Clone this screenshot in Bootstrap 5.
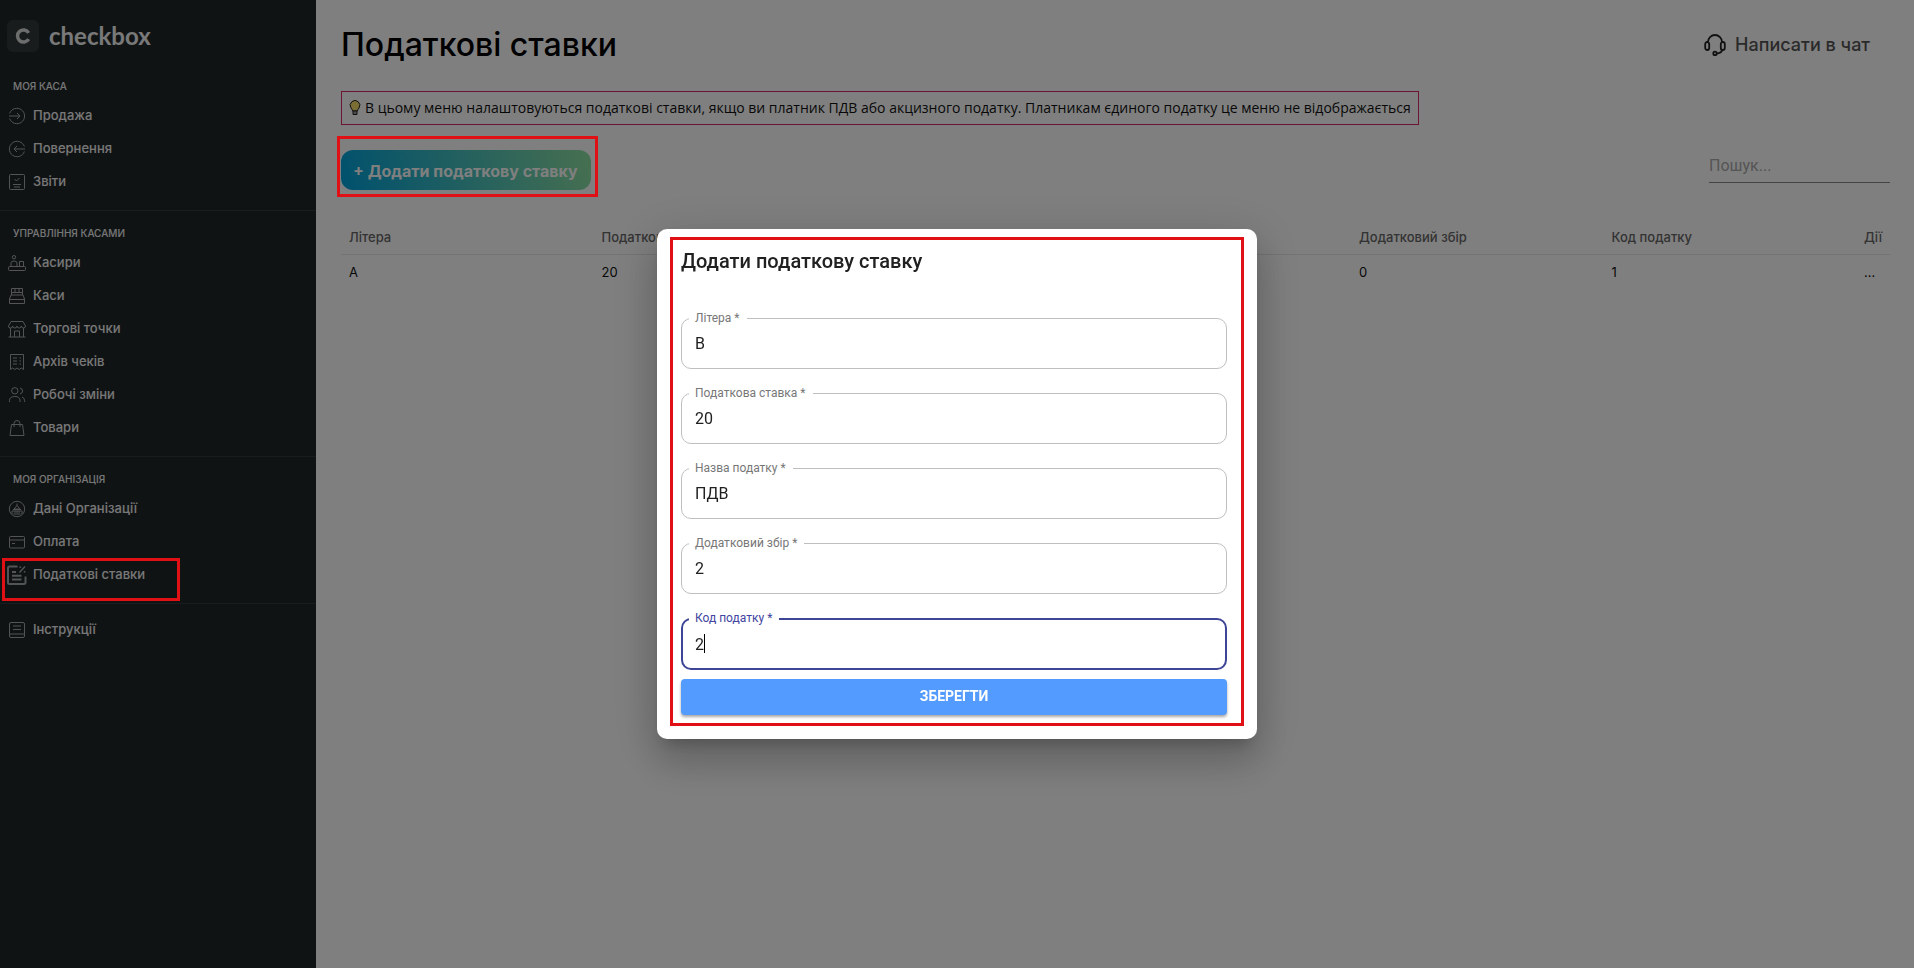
<!DOCTYPE html>
<html lang="uk">
<head>
<meta charset="utf-8">
<meta name="viewport" content="width=device-width, initial-scale=1">
<title>Податкові ставки</title>
<link href="https://cdn.jsdelivr.net/npm/bootstrap@5.3.0/dist/css/bootstrap.min.css" rel="stylesheet">
<style>
body{font-family:Inter,"Noto Sans",sans-serif;font-size:13px;color:#111;background:#fff}
/* sidebar */
.side{width:316px;background:#202629}
.brand{height:52px;padding:20px 0 0 7px;gap:10px;color:#fff;text-decoration:none}
.brand-mark{width:32px;height:32px;border-radius:6px;background:#32383b}
.brand-name{font:700 24px/32px Lato,sans-serif;color:#f2f2f2}
.group{padding:14px 0 12px;border-bottom:1px solid #343b3e}
.group.first{padding-top:26px}
.group.last{padding-top:9px;border:0}
.group h2{font:500 10px/16px Inter,sans-serif;margin:0 0 5px 13px;color:#eee}
.side a.item{height:33px;padding-left:8px;gap:7px;color:#f0f0f0;font-size:13px;font-weight:500;text-decoration:none}
.item svg{width:18px;height:18px;fill:none;stroke:#a4a9ab;stroke-width:1;flex:none}
/* main */
.page{padding:25px 24px 25px 25px}
.page h1{font:500 32px/40px Inter,sans-serif;margin:0;color:#000}
.chat{font-size:18px;line-height:24px;font-weight:500;color:#555;text-decoration:none;gap:9px;margin-right:20px}
.tip{border:1px solid #d62a6c;height:34px;padding:0 7px;margin-top:26px;font-family:"Open Sans","Noto Sans",sans-serif;font-size:14px;line-height:32px;gap:4px;width:fit-content}
.toolbar{margin-top:25px}
.add{height:40px;border:0;border-radius:12px;padding:2px 13px 0 12px;font-size:16px;font-weight:700;color:#fff;background:linear-gradient(72deg,#00a2dc,#8fe0a0)}
.search{width:181px;height:33px;border:0;border-bottom:1px solid #888;border-radius:0;padding:0 0 2px;font:16px/30px Roboto,sans-serif;background:transparent}
.search::placeholder{color:#aaa}
.rates{margin:32px 0 0;table-layout:fixed;font-size:13px;line-height:20px}
.rates th{font-weight:500;color:#666;padding:5px 8px 7px;border-color:#e6e6e6}
.rates td{padding:7px 8px;border:0;color:#111}
.rates .acts{width:34px;white-space:nowrap}
/* red frames drawn over everything */
.frame{position:absolute;border:3px solid #e01014;z-index:1070;pointer-events:none}
.frame-item{top:0;left:2px;width:178px;height:43px}
.frame-add{inset:-14px -7px -7px -4px}
.frame-form{inset:8px 13px 13px 13px}
/* dialog */
.rate-modal .modal-dialog{max-width:600px}
.rate-modal .modal-content{border:0;border-radius:10px;padding:20px 30px 24px 24px;font-family:Roboto,sans-serif;box-shadow:0 11px 15px -7px rgba(0,0,0,.2),0 24px 38px 3px rgba(0,0,0,.14),0 9px 46px 8px rgba(0,0,0,.12)}
.rate-modal .modal-title{font-size:20px;line-height:24px;font-weight:500;color:#212121;margin-bottom:45px}
.field{position:relative;margin-bottom:24px}
.field label{position:absolute;left:8px;top:-8px;padding:0 7px 0 6px;background:#fff;font-size:12px;line-height:16px;color:#777}
.field .form-control{height:51px;border:1px solid #bfbfbf;border-radius:10px;padding:0 13px;font-size:16px;color:#212121;box-shadow:none}
.field.active{margin-bottom:9px}
.field.active label{color:#3f45a0}
.field.active .form-control{height:52px;border:2px solid #3f4596;padding:0 12px;caret-color:transparent}
.cursor{position:absolute;left:23px;top:16px;width:1px;height:19px;background:#000}
.save{height:36px;border:0;border-radius:4px;padding:0 0 2px;background:#539bff;color:#fff;font-size:14px;font-weight:700;box-shadow:0 2px 3px rgba(0,0,0,.35)}
</style>
<script src="https://cdn.jsdelivr.net/npm/bootstrap@5.3.0/dist/js/bootstrap.bundle.min.js"></script>
</head>
<body>
<div class="d-flex min-vh-100">
  <nav class="side flex-shrink-0">
    <a href="#" class="brand d-flex align-items-center">
      <span class="brand-mark d-flex align-items-center justify-content-center"><svg width="16" height="16" viewBox="0 0 14 14" fill="none" stroke="#d8dada" stroke-width="3"><path d="M12 4.2A5.3 5.3 0 1 0 12 9.8"/></svg></span>
      <span class="brand-name">checkbox</span>
    </a>
    <section class="group first">
      <h2>МОЯ КАСА</h2>
      <a href="#" class="item d-flex align-items-center"><svg viewBox="0 0 18 18"><path d="M1.6 6.5a7.7 7.7 0 1 1 0 5M1 9h11M9 6l3 3-3 3"/></svg>Продажа</a>
      <a href="#" class="item d-flex align-items-center"><svg viewBox="0 0 18 18"><path d="M16.4 6.5a7.7 7.7 0 1 0 0 5M17 9H6M9 6 6 9l3 3"/></svg>Повернення</a>
      <a href="#" class="item d-flex align-items-center"><svg viewBox="0 0 18 18"><rect x="1.5" y="1.5" width="15" height="15" rx="1"/><path d="m6.500 6 2 2 3-3M5 11.500h8M6 14h6"/></svg>Звіти</a>
    </section>
    <section class="group">
      <h2>УПРАВЛІННЯ КАСАМИ</h2>
      <a href="#" class="item d-flex align-items-center"><svg viewBox="0 0 18 18"><circle cx="6" cy="3.200" r="1.700"/><path d="M3 12V9q0-2 3-2t3 2v3M11.500 12V7.500h4V12"/><rect x=".5" y="12.500" width="17" height="4" rx="1"/></svg>Касири</a>
      <a href="#" class="item d-flex align-items-center"><svg viewBox="0 0 18 18"><path d="M3.500 8V1.500h11V8M3.500 5.500h11M7 1.500v4M11 1.500v4M3 8h12l1.500 4v4.500h-15V12zM1.500 12.500h15"/></svg>Каси</a>
      <a href="#" class="item d-flex align-items-center"><svg viewBox="0 0 18 18"><path d="M3 1.500h12l2.500 4.500q0 2-2 2t-2.200-2q0 2-2.100 2T9 6q0 2-2.200 2T4.700 6q0 2-2.200 2T.5 6zM2.500 8v9M15.500 8v9M.5 17h17M6.500 17v-6h5v6"/></svg>Торгові точки</a>
      <a href="#" class="item d-flex align-items-center"><svg viewBox="0 0 18 18"><path d="M2.500 1.500h13v15l-2.200-1.500-2.100 1.500L9 15l-2.200 1.500L4.700 15l-2.200 1.500zM5 5h4M5 8h4M5 11h4M11.500 5h1.500M11.500 8h1.500M11.500 11h1.500"/></svg>Архів чеків</a>
      <a href="#" class="item d-flex align-items-center"><svg viewBox="0 0 18 18"><circle cx="6.800" cy="4.800" r="3.200"/><path d="M1.500 16v-1.500q0-4 5.300-4t5.200 4V16M12 2q2.600.6 2.600 3T12 8M14 11q2.600 1 2.600 3.500V16"/></svg>Робочі зміни</a>
      <a href="#" class="item d-flex align-items-center"><svg viewBox="0 0 18 18"><path d="M3.500 5.500h11l1.500 11H2zM6 8V4.500a3 3 0 0 1 6 0V8"/></svg>Товари</a>
    </section>
    <section class="group">
      <h2>МОЯ ОРГАНІЗАЦІЯ</h2>
      <a href="#" class="item d-flex align-items-center"><svg viewBox="0 0 18 18"><circle cx="9" cy="9" r="7.700"/><path d="M9 3.500v2M9 5.500 6 9h6zM5 9.500h8M4 14v-3h10v3M6 12h6M5.500 14h7"/></svg>Дані Організації</a>
      <a href="#" class="item d-flex align-items-center"><svg viewBox="0 0 18 18"><rect x="1.500" y="3.500" width="15" height="11.500" rx="1"/><path d="M1.500 7h15M4 10.500h3"/></svg>Оплата</a>
      <div class="position-relative">
        <a href="#" class="item d-flex align-items-center"><svg viewBox="0 0 18 18" overflow="visible"><path d="M9.500.5H1.500Q0 .5 0 2v14.500Q0 18 1.500 18h14q2 0 2-1.500v-6M4 6h4M4 9.800h9.500M4 13.500h9.500" stroke-width="2"/><path d="m11.500 6.500 5.500-6M11.500 1.200h1.600M15.800 5.800h1.600" stroke-width="1.400"/></svg>Податкові ставки</a>
        <span class="frame frame-item"></span>
      </div>
    </section>
    <section class="group last">
      <a href="#" class="item d-flex align-items-center"><svg viewBox="0 0 18 18"><rect x="1.500" y="1.500" width="15" height="15" rx="1.500"/><path d="M5 5h8M5 8.500h8M1.500 13h15"/></svg>Інструкції</a>
    </section>
  </nav>
  <main class="page flex-grow-1">
    <div class="d-flex justify-content-between align-items-center">
      <h1>Податкові ставки</h1>
      <a href="#" class="chat d-flex align-items-center"><svg width="22" height="22" viewBox="0 0 22 22" fill="none" stroke="#222" stroke-width="1.800"><path d="M4 9V8a7 7 0 0 1 14 0v1M18 15.500q0 3.500-5 4"/><rect x="1.200" y="8" width="4" height="8" rx="2"/><rect x="16.800" y="8" width="4" height="8" rx="2"/><circle cx="11" cy="19.400" r="1.700"/></svg>Написати в чат</a>
    </div>
    <div class="tip d-flex align-items-center"><svg width="12" height="16" viewBox="0 0 12 16"><path d="M3.500 11Q3.500 9.500 2 8A4.800 4.800 0 1 1 10 8Q8.500 9.500 8.500 11z" fill="#f7dc6a" stroke="#222"/><path d="M4 11h4v3.500H4z" fill="#999" stroke="#222"/></svg><span>В цьому меню налаштовуються податкові ставки, якщо ви платник ПДВ або акцизного податку. Платникам єдиного податку це меню не відображається</span></div>
    <div class="toolbar d-flex justify-content-between align-items-start">
      <div class="position-relative">
        <button type="button" class="add">+ Додати податкову ставку</button>
        <span class="frame frame-add"></span>
      </div>
      <input type="search" class="form-control search" placeholder="Пошук..." aria-label="Пошук">
    </div>
    <table class="table rates">
      <thead><tr><th>Літера</th><th>Податкова ставка</th><th></th><th></th><th>Додатковий збір</th><th>Код податку</th><th class="acts">Дії</th></tr></thead>
      <tbody><tr><td>A</td><td>20</td><td></td><td></td><td>0</td><td>1</td><td class="acts">...</td></tr></tbody>
    </table>
  </main>
</div>
<div class="modal-backdrop show"></div>
<div class="modal rate-modal d-block show" role="dialog" aria-labelledby="rateTitle">
  <div class="modal-dialog modal-dialog-centered">
    <form class="modal-content">
      <h2 class="modal-title" id="rateTitle">Додати податкову ставку</h2>
      <div class="field"><input class="form-control" id="letter" value="B"><label for="letter">Літера *</label></div>
      <div class="field"><input class="form-control" id="rate" value="20"><label for="rate">Податкова ставка *</label></div>
      <div class="field"><input class="form-control" id="title" value="ПДВ"><label for="title">Назва податку *</label></div>
      <div class="field"><input class="form-control" id="extra" value="2"><label for="extra">Додатковий збір *</label></div>
      <div class="field active"><input class="form-control" id="code" value="2"><label for="code">Код податку *</label><span class="cursor"></span></div>
      <button type="button" class="save">ЗБЕРЕГТИ</button>
      <span class="frame frame-form"></span>
    </form>
  </div>
</div>
</body>
</html>
